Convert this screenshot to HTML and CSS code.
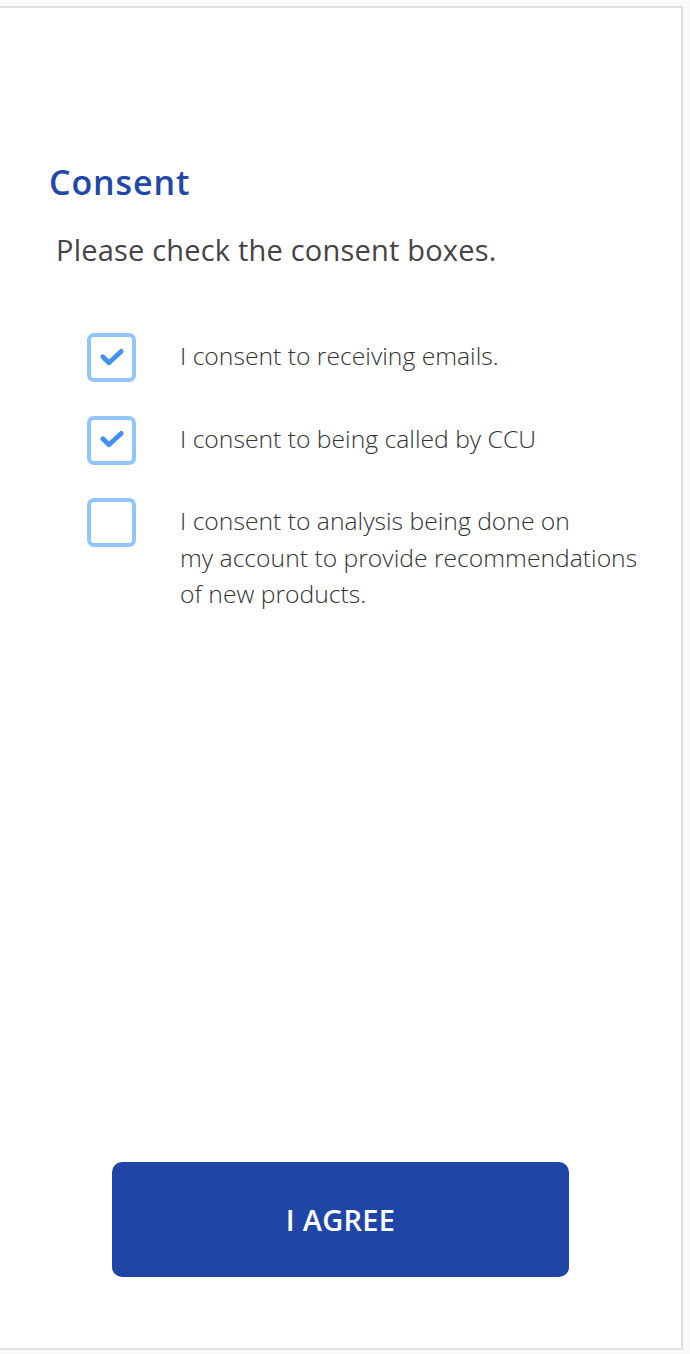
FILE: index.html
```html
<!DOCTYPE html>
<html>
<head>
<meta charset="utf-8">
<link rel="stylesheet" href="styles.css">
</head>
<body>
<div class="panel">
  <h1 class="title">Consent</h1>
  <p class="intro">Please check the consent boxes.</p>
  <ul class="items">
    <li class="item">
      <span class="box checked"><svg class="tick" viewBox="0 0 24 24" width="24" height="24"><path d="M2.8 10.8 L8.9 16.8 L21.2 5.4" fill="none" stroke="#4490f1" stroke-width="4.8" stroke-linecap="round" stroke-linejoin="round"/></svg></span>
      <span class="label">I consent to receiving emails.</span>
    </li>
    <li class="item">
      <span class="box checked"><svg class="tick" viewBox="0 0 24 24" width="24" height="24"><path d="M2.8 10.8 L8.9 16.8 L21.2 5.4" fill="none" stroke="#4490f1" stroke-width="4.8" stroke-linecap="round" stroke-linejoin="round"/></svg></span>
      <span class="label">I consent to being called by CCU</span>
    </li>
    <li class="item">
      <span class="box"></span>
      <span class="label">I consent to analysis being done on<br>my account to provide recommendations<br>of new products.</span>
    </li>
  </ul>
  <button class="agree">I AGREE</button>
</div>
</body>
</html>
```
FILE: styles.css
```css
html, body {
  margin: 0;
  padding: 0;
  background: #fafafa;
}
body {
  padding-top: 6px;
}
.panel {
  box-sizing: border-box;
  width: 683px;
  height: 1344px;
  background: #fff;
  border: 2px solid #dfdfdf;
  border-left: none;
  display: flex;
  flex-direction: column;
}
.title {
  margin: 154px 0 0 49px;
  font-family: "Open Sans", sans-serif;
  font-weight: 600;
  font-size: 34px;
  letter-spacing: 0.9px;
  line-height: 40px;
  color: #2148a8;
}
.intro {
  margin: 32px 0 0 56px;
  font-family: "Open Sans", sans-serif;
  font-weight: 400;
  font-size: 29px;
  letter-spacing: 0.2px;
  line-height: 32px;
  color: #444;
}
.items {
  list-style: none;
  margin: 67px 0 0 87px;
  padding: 0;
  display: flex;
  flex-direction: column;
  gap: 33.5px;
}
.item {
  display: flex;
  align-items: flex-start;
  gap: 44px;
}
.box {
  box-sizing: border-box;
  flex: none;
  width: 49px;
  height: 49px;
  border: 4px solid #93c4fa;
  border-radius: 7px;
  display: flex;
  align-items: center;
  justify-content: center;
}
.tick {
  overflow: visible;
}
.label {
  padding-top: 5px;
  font-family: "Open Sans", sans-serif;
  font-weight: 300;
  font-size: 24.7px;
  line-height: 36.5px;
  color: #333;
}
.agree {
  margin: auto auto 71px auto;
  width: 457px;
  height: 115px;
  border: none;
  border-radius: 10px;
  background: #1f46a6;
  color: #fff;
  font-family: "Open Sans", sans-serif;
  font-weight: 600;
  font-size: 29px;
  letter-spacing: 0.3px;
  cursor: pointer;
}
```
